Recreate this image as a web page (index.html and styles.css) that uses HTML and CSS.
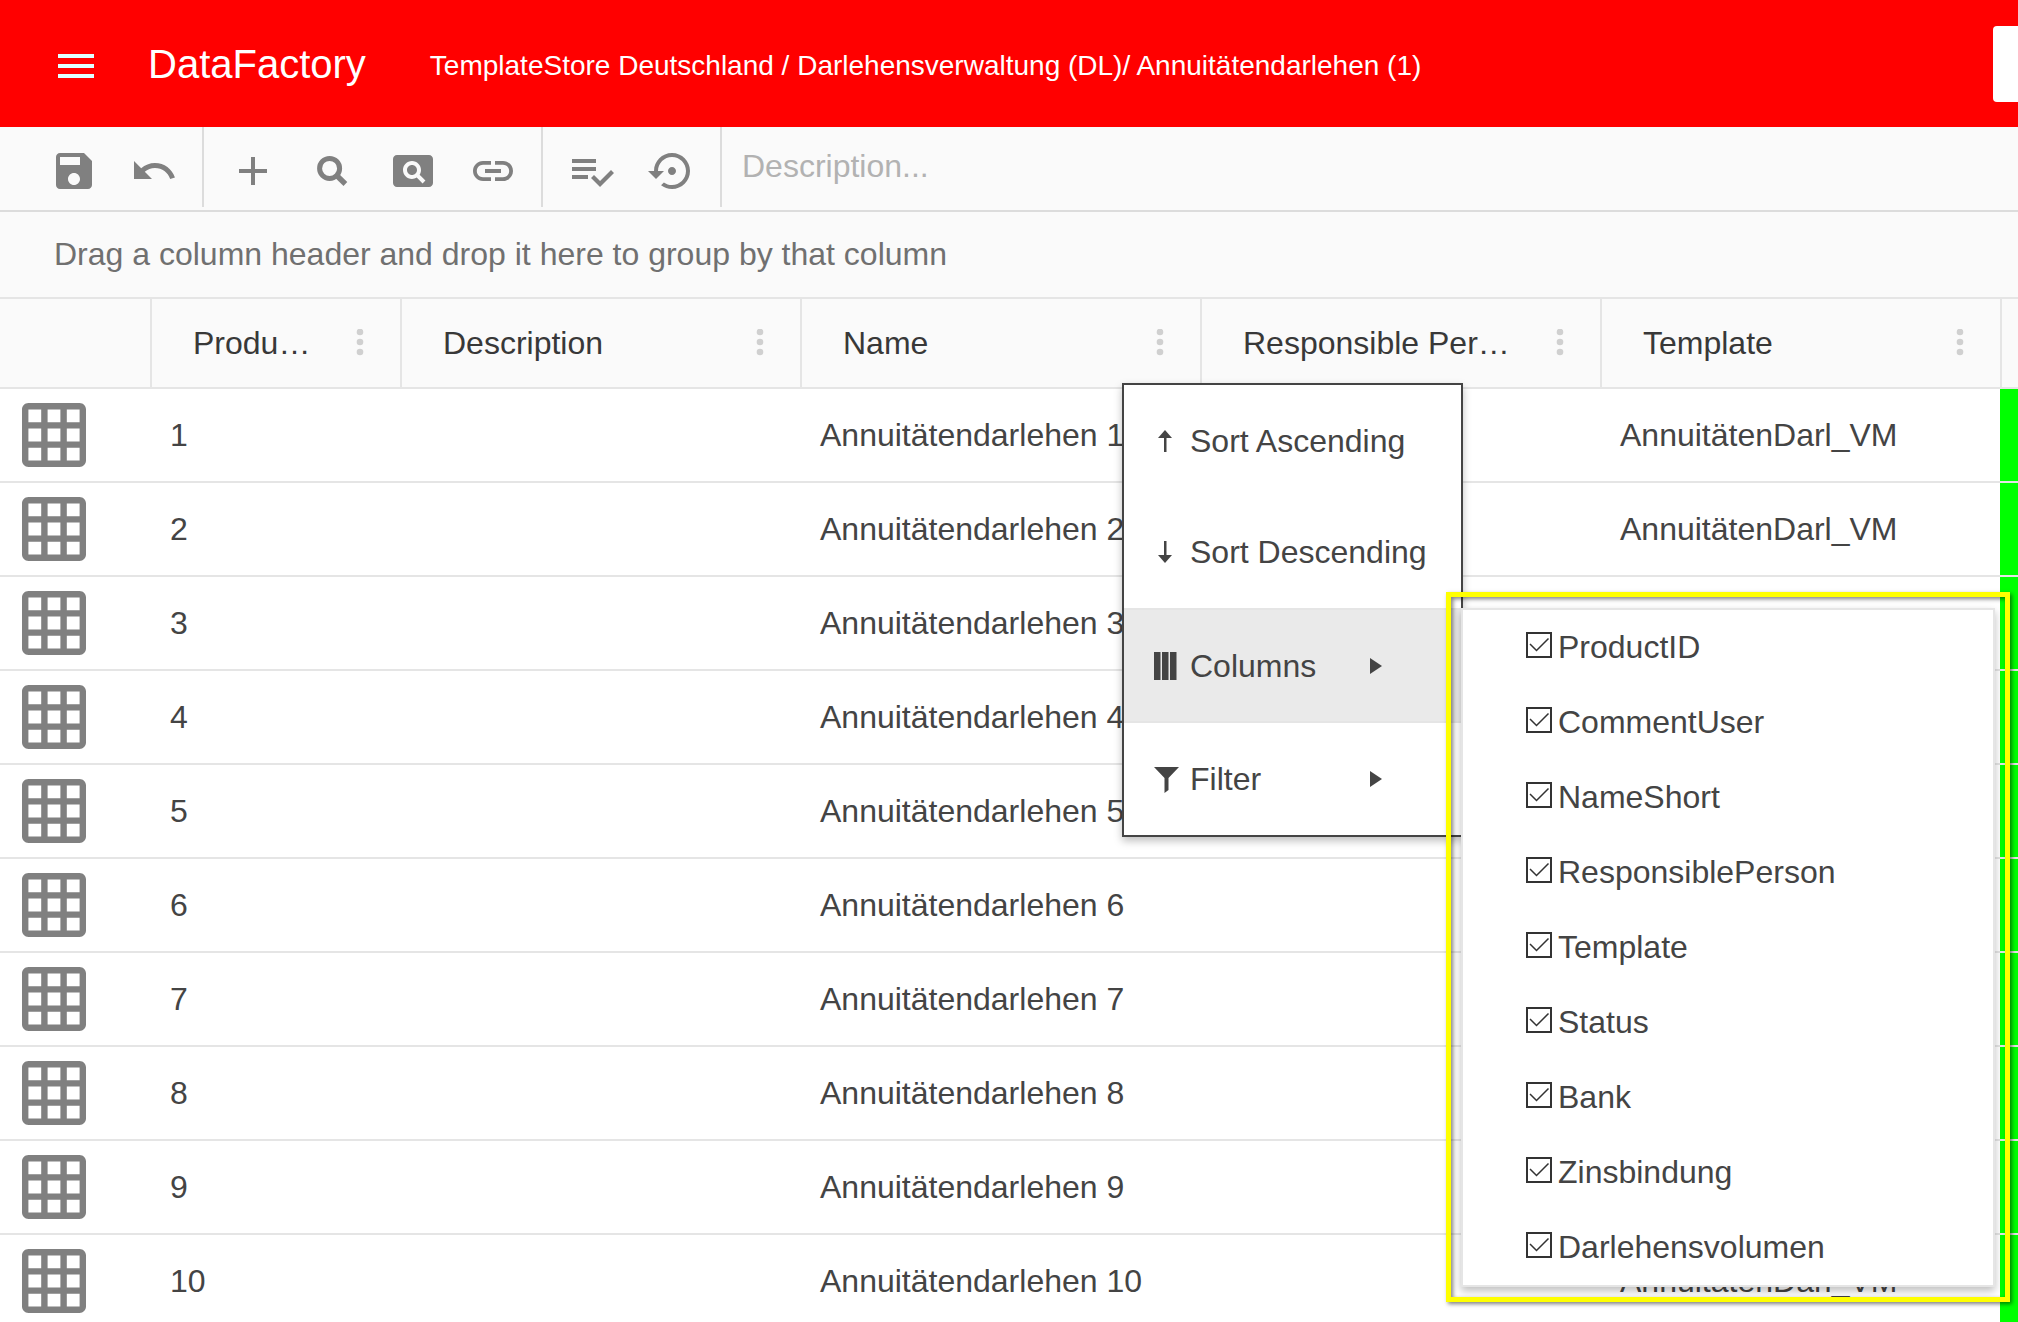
FILE: index.html
```html
<!DOCTYPE html>
<html lang="de">
<head>
<meta charset="utf-8">
<meta name="viewport" content="width=device-width, initial-scale=1">
<title>DataFactory</title>
<link rel="stylesheet" href="styles.css">
</head>
<body>
<svg class="sprite" aria-hidden="true">
  <symbol id="grid" viewBox="2 2 20 20"><path d="M20 2H4c-1.100 0-2 .9-2 2v16c0 1.100.9 2 2 2h16c1.100 0 2-.9 2-2V4c0-1.100-.9-2-2-2zM8 20H4v-4h4v4zm0-6H4v-4h4v4zm0-6H4V4h4v4zm6 12h-4v-4h4v4zm0-6h-4v-4h4v4zm0-6h-4V4h4v4zm6 12h-4v-4h4v4zm0-6h-4v-4h4v4zm0-6h-4V4h4v4z"/></symbol>
  <symbol id="dots" viewBox="0 0 8 28"><circle cx="4" cy="3" r="3.300"/><circle cx="4" cy="13" r="3.300"/><circle cx="4" cy="23" r="3.300"/></symbol>
</svg>
<div class="app">
  <header class="topbar">
    <button class="burger" aria-label="Menu"><svg viewBox="0 0 36 24"><path d="M0 0h36v4H0zM0 10h36v4H0zM0 20h36v4H0z"/></svg></button>
    <h1 class="brand">DataFactory</h1>
    <p class="crumbs">TemplateStore Deutschland / Darlehensverwaltung (DL)/ Annuitätendarlehen (1)</p>
    <input class="topbox" type="text" aria-label="Search">
  </header>

  <div class="toolbar">
    <div class="tools tools-first">
      <button class="tool" aria-label="Save"><svg viewBox="0 0 24 24"><path d="M17 3H5c-1.110 0-2 .9-2 2v14c0 1.100.89 2 2 2h14c1.100 0 2-.9 2-2V7l-4-4zm-5 16c-1.660 0-3-1.340-3-3s1.340-3 3-3 3 1.340 3 3-1.340 3-3 3zm3-10H5V5h10v4z"/></svg></button>
      <button class="tool" aria-label="Undo"><svg viewBox="0 0 24 24"><path d="M12.500 8c-2.650 0-5.050.99-6.900 2.600L2 7v9h9l-3.620-3.620c1.390-1.160 3.160-1.880 5.120-1.880 3.540 0 6.550 2.310 7.600 5.500l2.370-.78C21.080 11.030 17.150 8 12.500 8z"/></svg></button>
    </div>
    <div class="tools">
      <button class="tool" aria-label="Add"><svg viewBox="0 0 24 24"><path d="M19 13h-6v6h-2v-6H5v-2h6V5h2v6h6v2z"/></svg></button>
      <button class="tool" aria-label="Search rows"><svg viewBox="0 0 24 24"><circle cx="10.300" cy="10.700" r="5" fill="none" stroke="currentColor" stroke-width="2.500"/><path fill="none" stroke="currentColor" stroke-width="2.700" d="M13.600 14l4.600 4.500"/></svg></button>
      <button class="tool" aria-label="Preview"><svg viewBox="0 0 24 24"><path d="M11.500 9C10.120 9 9 10.120 9 11.500s1.120 2.500 2.500 2.500 2.500-1.120 2.500-2.500S12.880 9 11.500 9zM20 4H4c-1.100 0-2 .9-2 2v12c0 1.100.9 2 2 2h16c1.100 0 2-.9 2-2V6c0-1.100-.9-2-2-2zm-3.210 14.210l-2.910-2.910c-.69.44-1.510.7-2.390.7C9.010 16 7 13.990 7 11.500S9.010 7 11.500 7 16 9.010 16 11.500c0 .88-.26 1.690-.7 2.390l2.910 2.900-1.420 1.420z"/></svg></button>
      <button class="tool" aria-label="Link"><svg viewBox="0 0 24 24"><path d="M3.900 12c0-1.710 1.390-3.100 3.100-3.100h4V7H7c-2.760 0-5 2.240-5 5s2.240 5 5 5h4v-1.900H7c-1.710 0-3.100-1.390-3.100-3.100zM8 13h8v-2H8v2zm9-6h-4v1.900h4c1.710 0 3.100 1.390 3.100 3.100s-1.390 3.100-3.100 3.100h-4V17h4c2.760 0 5-2.240 5-5s-2.240-5-5-5z"/></svg></button>
    </div>
    <div class="tools">
      <button class="tool" aria-label="Check list"><svg viewBox="0 0 24 24"><path d="M14 10H2v2h12v-2zm0-4H2v2h12V6zM2 16h8v-2H2v2zm19.500-4.500L23 13l-6.990 7-4.510-4.500L13 14l3.010 3 5.490-5.500z"/></svg></button>
      <button class="tool" aria-label="Restore"><svg viewBox="0 0 24 24"><path d="M14 12c0-1.100-.9-2-2-2s-2 .9-2 2 .9 2 2 2 2-.9 2-2zm-2-9c-4.970 0-9 4.030-9 9H0l4 4 4-4H5c0-3.870 3.130-7 7-7s7 3.130 7 7-3.130 7-7 7c-1.510 0-2.910-.49-4.060-1.300l-1.420 1.440C8.040 20.300 9.940 21 12 21c4.970 0 9-4.030 9-9s-4.030-9-9-9z"/></svg></button>
    </div>
    <input class="desc" type="text" placeholder="Description..." aria-label="Description">
  </div>

  <p class="groupbar">Drag a column header and drop it here to group by that column</p>

  <main class="grid">
    <table class="rows">
      <colgroup><col class="c-icon"><col class="c-id"><col class="c-wide"><col class="c-wide"><col class="c-wide"><col class="c-wide"><col></colgroup>
      <thead><tr>
        <th></th>
        <th><div class="head"><span class="label">ProductID</span><button class="more" aria-label="Column menu"><svg><use href="#dots"/></svg></button></div></th>
        <th><div class="head"><span class="label">Description</span><button class="more" aria-label="Column menu"><svg><use href="#dots"/></svg></button></div></th>
        <th><div class="head"><span class="label">Name</span><button class="more" aria-label="Column menu"><svg><use href="#dots"/></svg></button></div></th>
        <th><div class="head"><span class="label">Responsible Person</span><button class="more" aria-label="Column menu"><svg><use href="#dots"/></svg></button></div></th>
        <th><div class="head"><span class="label">Template</span><button class="more" aria-label="Column menu"><svg><use href="#dots"/></svg></button></div></th>
        <th></th>
      </tr></thead>
      <tbody>
        <tr><td><svg class="gridicon"><use href="#grid"/></svg></td><td>1</td><td></td><td>Annuitätendarlehen 1</td><td></td><td>AnnuitätenDarl_VM</td><td class="ok"></td></tr>
        <tr><td><svg class="gridicon"><use href="#grid"/></svg></td><td>2</td><td></td><td>Annuitätendarlehen 2</td><td></td><td>AnnuitätenDarl_VM</td><td class="ok"></td></tr>
        <tr><td><svg class="gridicon"><use href="#grid"/></svg></td><td>3</td><td></td><td>Annuitätendarlehen 3</td><td></td><td></td><td class="ok"></td></tr>
        <tr><td><svg class="gridicon"><use href="#grid"/></svg></td><td>4</td><td></td><td>Annuitätendarlehen 4</td><td></td><td></td><td class="ok"></td></tr>
        <tr><td><svg class="gridicon"><use href="#grid"/></svg></td><td>5</td><td></td><td>Annuitätendarlehen 5</td><td></td><td></td><td class="ok"></td></tr>
        <tr><td><svg class="gridicon"><use href="#grid"/></svg></td><td>6</td><td></td><td>Annuitätendarlehen 6</td><td></td><td></td><td class="ok"></td></tr>
        <tr><td><svg class="gridicon"><use href="#grid"/></svg></td><td>7</td><td></td><td>Annuitätendarlehen 7</td><td></td><td></td><td class="ok"></td></tr>
        <tr><td><svg class="gridicon"><use href="#grid"/></svg></td><td>8</td><td></td><td>Annuitätendarlehen 8</td><td></td><td></td><td class="ok"></td></tr>
        <tr><td><svg class="gridicon"><use href="#grid"/></svg></td><td>9</td><td></td><td>Annuitätendarlehen 9</td><td></td><td></td><td class="ok"></td></tr>
        <tr><td><svg class="gridicon"><use href="#grid"/></svg></td><td>10</td><td></td><td>Annuitätendarlehen 10</td><td></td><td>AnnuitätenDarl_VM</td><td class="ok"></td></tr>
      </tbody>
    </table>

    <div class="menu">
      <button class="item sort"><svg class="mi" viewBox="0 0 28 28"><path d="M13 3l7 8h-5.500v14h-2.500V11H6z"/></svg>Sort Ascending</button>
      <button class="item sort"><svg class="mi" viewBox="0 0 28 28"><path d="M13 25l7-8h-5.500V3h-2.500v14H6z"/></svg>Sort Descending</button>
      <button class="item active"><svg class="mi" viewBox="0 0 28 28"><path d="M2 0h6.500v28H2zM10 0h6.500v28H10zM18 0h6.500v28H18z"/></svg>Columns<svg class="arrow" viewBox="0 0 12 16"><path d="M0 0l12 8-12 8z"/></svg></button>
      <button class="item"><svg class="mi" viewBox="0 0 28 28"><path d="M2 2h25L16.500 13v12l-4 3V13z"/></svg>Filter<svg class="arrow" viewBox="0 0 12 16"><path d="M0 0l12 8-12 8z"/></svg></button>
    </div>

    <div class="submenu">
      <label class="opt"><input type="checkbox" checked>ProductID</label>
      <label class="opt"><input type="checkbox" checked>CommentUser</label>
      <label class="opt"><input type="checkbox" checked>NameShort</label>
      <label class="opt"><input type="checkbox" checked>ResponsiblePerson</label>
      <label class="opt"><input type="checkbox" checked>Template</label>
      <label class="opt"><input type="checkbox" checked>Status</label>
      <label class="opt"><input type="checkbox" checked>Bank</label>
      <label class="opt"><input type="checkbox" checked>Zinsbindung</label>
      <label class="opt"><input type="checkbox" checked>Darlehensvolumen</label>
    </div>
    <div class="marker"></div>
  </main>
</div>
</body>
</html>
```
FILE: styles.css
```css
* { box-sizing: border-box; }
body {
  margin: 0;
  font: 32px/40px "Liberation Sans", Arial, sans-serif;
  color: #444;
  background: #fff;
}
button, input { font: inherit; color: inherit; }
button { margin: 0; padding: 0; border: 0; background: none; cursor: pointer; }
svg { display: block; fill: currentColor; }
.sprite { position: absolute; width: 0; height: 0; }
.app { height: 100vh; overflow: hidden; }

/* Top bar */
.topbar {
  display: flex;
  align-items: center;
  height: 127px;
  padding-left: 58px;
  background: #f00;
  color: #fff;
}
.burger svg { width: 36px; height: 24px; margin-top: 4px; fill: #e0ffff; }
.brand { margin: 0 0 0 54px; font-size: 40px; font-weight: 400; }
.crumbs { margin: 4px auto 0 64px; font-size: 28px; white-space: nowrap; }
.topbox {
  width: 25px;
  height: 76px;
  padding: 0;
  border: 0;
  border-radius: 4px 0 0 4px;
  background: #fff;
}

/* Toolbar */
.toolbar {
  display: flex;
  height: 85px;
  padding-bottom: 3px;
  border-bottom: 2px solid #dcdcdc;
  background: #fafafa;
}
.tools {
  display: flex;
  gap: 32px;
  padding: 8px 24px 0 25px;
  border-right: 2px solid #dcdcdc;
  align-items: center;
}
.tools-first { padding-left: 50px; }
.tool { color: #808080; }
.tool svg { width: 48px; height: 48px; }
.desc {
  flex: 1;
  min-width: 0;
  padding: 0 20px 2px;
  border: 0;
  outline: 0;
  background: none;
}
.desc::placeholder { color: #b2b2b2; opacity: 1; }

.groupbar {
  margin: 0;
  padding: 22px 54px 23px;
  border-bottom: 2px solid #e5e5e5;
  background: #fafafa;
  color: #707070;
}

/* Grid */
.grid { position: relative; }
.rows { width: 100%; min-width: 2018px; border-spacing: 0; table-layout: fixed; }
.c-icon { width: 150px; }
.c-id { width: 250px; }
.c-wide { width: 400px; }
th {
  height: 90px;
  padding: 0;
  border-left: 2px solid #e5e5e5;
  border-bottom: 2px solid #e5e5e5;
  background: #fafafa;
  color: #383838;
  font-weight: 400;
  text-align: left;
}
th:first-child { border-left: 0; }
.head { display: flex; align-items: center; padding: 0 36px 0 41px; }
.label { flex: 1; overflow: hidden; text-overflow: ellipsis; white-space: nowrap; }
.more { margin-left: 36px; color: #d0d0d0; }
.more svg { width: 8px; height: 28px; }
td { height: 94px; padding: 0 20px; border-bottom: 2px solid #e5e5e5; white-space: nowrap; }
td.ok { padding: 0; background: #0f0 padding-box; }
.gridicon { width: 64px; height: 64px; margin-left: 2px; color: #808080; }

/* Column menu */
.menu {
  position: absolute;
  top: 84px;
  left: 1122px;
  width: 341px;
  padding: 1px 0;
  border: 2px solid #444;
  background: #fff;
  box-shadow: 0 4px 8px rgba(0, 0, 0, .25);
}
.item {
  display: flex;
  align-items: center;
  width: 100%;
  height: 111px;
  padding-left: 28px;
}
.item.sort { padding-bottom: 2px; }
.item.active {
  height: 115px;
  border-top: 2px solid #e5e5e5;
  border-bottom: 2px solid #e5e5e5;
  background: #eaeaea;
}
.mi { width: 28px; height: 28px; margin-right: 10px; }
.arrow { width: 12px; height: 16px; margin: 0 79px 0 auto; }

.submenu {
  position: absolute;
  top: 309px;
  left: 1461px;
  width: 534px;
  border: 2px solid #e5e5e5;
  background: #fff;
  box-shadow: 0 4px 8px rgba(0, 0, 0, .25);
}
.opt { display: flex; align-items: center; height: 75px; padding: 0 0 2px 63px; }
.opt input {
  appearance: none;
  width: 26px;
  height: 26px;
  margin: 0 6px 4px 0;
  border: 2px solid #333;
  background: #fff url("data:image/svg+xml,%3Csvg xmlns='http://www.w3.org/2000/svg' viewBox='0 0 22 22'%3E%3Cpath d='M2 10l6.500 6.500L20.500 4.500' fill='none' stroke='%23333' stroke-width='1.500'/%3E%3C/svg%3E");
}

/* Highlight frame round the open submenu */
.marker {
  position: absolute;
  top: 293px;
  left: 1446px;
  width: 564px;
  height: 710px;
  border: 5px solid #ff0;
  box-shadow: 2px 2px 4px rgba(0, 0, 0, .5), inset 2px 2px 4px rgba(0, 0, 0, .5);
  pointer-events: none;
}
```
